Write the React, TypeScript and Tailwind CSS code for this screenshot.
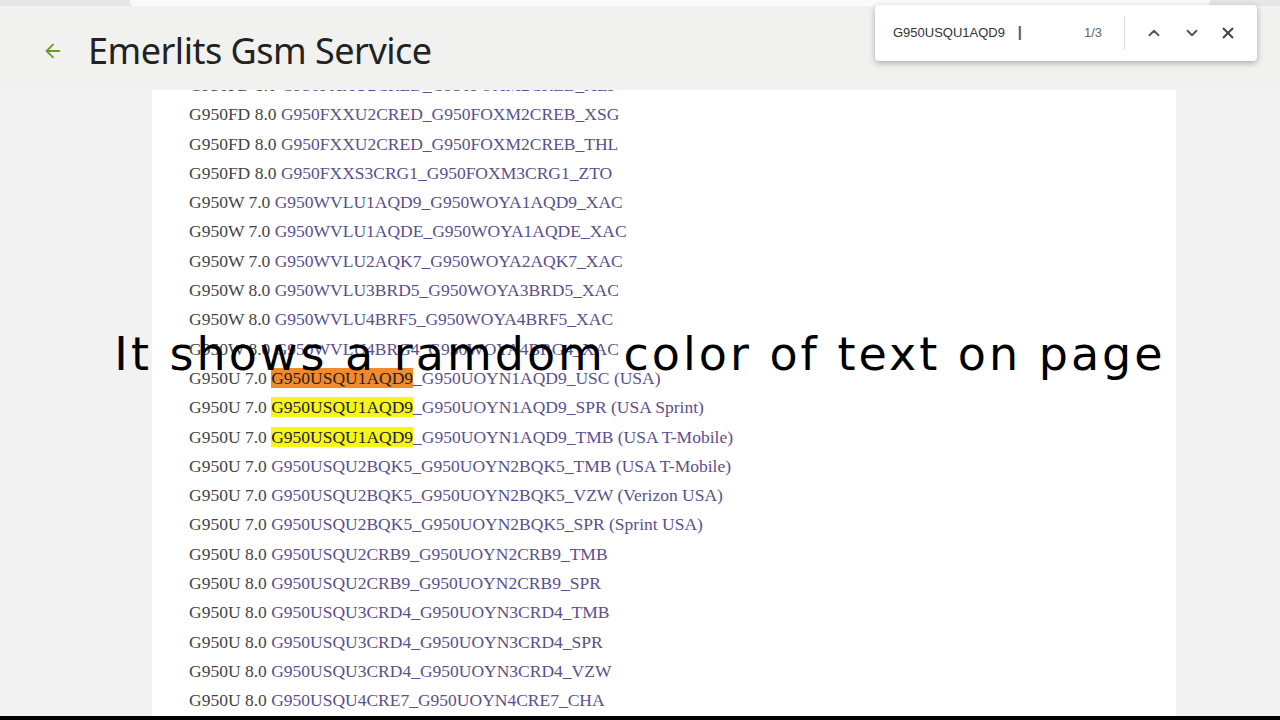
import { ArrowLeft, ChevronUp, ChevronDown, X } from "lucide-react";

type Row = { m: string; v: string; hit?: string; rest: string; color?: "o" | "y" };

const rows: Row[] = [
  { m: "G950FD", v: "8.0", rest: "G950FXXU2CRED_G950FOXM2CREB_XEF" },
  { m: "G950FD", v: "8.0", rest: "G950FXXU2CRED_G950FOXM2CREB_XSG" },
  { m: "G950FD", v: "8.0", rest: "G950FXXU2CRED_G950FOXM2CREB_THL" },
  { m: "G950FD", v: "8.0", rest: "G950FXXS3CRG1_G950FOXM3CRG1_ZTO" },
  { m: "G950W", v: "7.0", rest: "G950WVLU1AQD9_G950WOYA1AQD9_XAC" },
  { m: "G950W", v: "7.0", rest: "G950WVLU1AQDE_G950WOYA1AQDE_XAC" },
  { m: "G950W", v: "7.0", rest: "G950WVLU2AQK7_G950WOYA2AQK7_XAC" },
  { m: "G950W", v: "8.0", rest: "G950WVLU3BRD5_G950WOYA3BRD5_XAC" },
  { m: "G950W", v: "8.0", rest: "G950WVLU4BRF5_G950WOYA4BRF5_XAC" },
  { m: "G950W", v: "8.0", rest: "G950WVLU4BRG4_G950WOYA4BRG4_XAC" },
  { m: "G950U", v: "7.0", hit: "G950USQU1AQD9", rest: "_G950UOYN1AQD9_USC (USA)", color: "o" },
  { m: "G950U", v: "7.0", hit: "G950USQU1AQD9", rest: "_G950UOYN1AQD9_SPR (USA Sprint)", color: "y" },
  { m: "G950U", v: "7.0", hit: "G950USQU1AQD9", rest: "_G950UOYN1AQD9_TMB (USA T-Mobile)", color: "y" },
  { m: "G950U", v: "7.0", rest: "G950USQU2BQK5_G950UOYN2BQK5_TMB (USA T-Mobile)" },
  { m: "G950U", v: "7.0", rest: "G950USQU2BQK5_G950UOYN2BQK5_VZW (Verizon USA)" },
  { m: "G950U", v: "7.0", rest: "G950USQU2BQK5_G950UOYN2BQK5_SPR (Sprint USA)" },
  { m: "G950U", v: "8.0", rest: "G950USQU2CRB9_G950UOYN2CRB9_TMB" },
  { m: "G950U", v: "8.0", rest: "G950USQU2CRB9_G950UOYN2CRB9_SPR" },
  { m: "G950U", v: "8.0", rest: "G950USQU3CRD4_G950UOYN3CRD4_TMB" },
  { m: "G950U", v: "8.0", rest: "G950USQU3CRD4_G950UOYN3CRD4_SPR" },
  { m: "G950U", v: "8.0", rest: "G950USQU3CRD4_G950UOYN3CRD4_VZW" },
  { m: "G950U", v: "8.0", rest: "G950USQU4CRE7_G950UOYN4CRE7_CHA" },
];

export default function App() {
  return (
    <div className="relative w-[1280px] h-[720px] overflow-hidden bg-[#f2f2f2]">
      <div className="h-[6px] bg-[#e6e6e6] flex">
        <div className="ml-[130px] w-[1080px] bg-[#fafafa] rounded-b" />
      </div>
      <header className="h-[84px] bg-[#f1f1f0] flex items-center pl-[42px] pt-[6px] relative z-10">
        <ArrowLeft className="w-[22px] h-[22px] text-[#6e9a2a]" strokeWidth={2} />
        <h1 className="ml-[24px] text-[36px] text-[#222] font-[Noto_Sans,sans-serif] tracking-[-0.5px]">
          Emerlits Gsm Service
        </h1>
      </header>
      <main className="ml-[152px] w-[1024px] h-[626px] bg-white overflow-hidden">
        <div className="-mt-[19px] pl-[37px] font-[Liberation_Serif,serif] text-[17.5px] leading-[29.3px]">
          {rows.map((r, i) => (
            <div key={i} className="whitespace-nowrap">
              <span className="text-[#444]">{r.m} {r.v} </span>
              {r.hit && (
                <span className={(r.color === "o" ? "bg-[#f08a2e]" : "bg-[#f5f51a]") + " text-[#222]"}>{r.hit}</span>
              )}
              <span className="text-[#5a4f8f]">{r.rest}</span>
            </div>
          ))}
        </div>
      </main>
      <div className="absolute left-0 right-0 bottom-0 h-[4px] bg-black" />
      <div className="absolute left-[875px] top-[5px] w-[382px] h-[56px] bg-white rounded shadow-[0_2px_6px_rgba(0,0,0,0.3)] flex items-center font-[Liberation_Sans,sans-serif] z-20">
        <span className="ml-[18px] text-[13px] text-[#333]">G950USQU1AQD9</span>
        <span className="ml-[12px] text-[20px] text-[#555] font-light">I</span>
        <span className="ml-auto text-[13px] text-[#666]">1/3</span>
        <div className="ml-[22px] w-px h-[34px] bg-[#ddd]" />
        <ChevronUp className="ml-[20px] w-[18px] h-[18px] text-[#555]" strokeWidth={2.5} />
        <ChevronDown className="ml-[20px] w-[18px] h-[18px] text-[#555]" strokeWidth={2.5} />
        <X className="ml-[18px] mr-[20px] w-[18px] h-[18px] text-[#444]" strokeWidth={2.5} />
      </div>
      <div className="absolute left-0 right-0 top-[320px] text-center text-[46px] text-black font-[DejaVu_Sans,sans-serif] tracking-[3px] z-30">
        It shows a ramdom color of text on page
      </div>
    </div>
  );
}
